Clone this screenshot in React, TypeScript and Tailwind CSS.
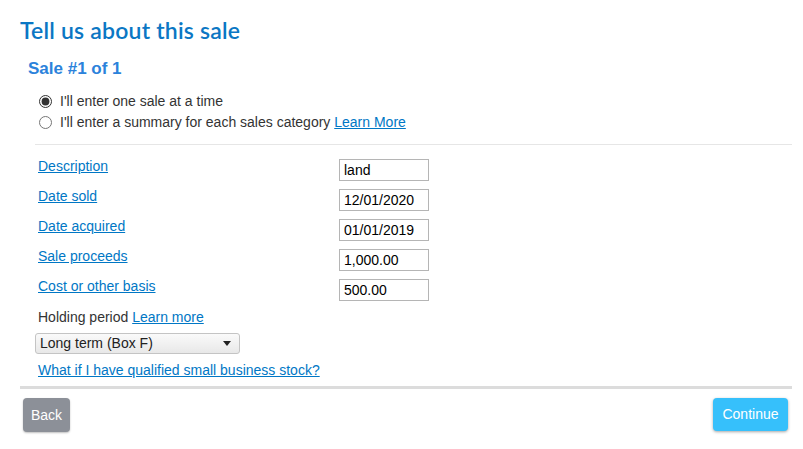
import React from 'react';

const link = 'text-[#0077c5] underline';

const fields = [
  { label: 'Description', value: 'land' },
  { label: 'Date sold', value: '12/01/2020' },
  { label: 'Date acquired', value: '01/01/2019' },
  { label: 'Sale proceeds', value: '1,000.00' },
  { label: 'Cost or other basis', value: '500.00' },
];

export default function App() {
  return (
    <div className="w-[803px] h-[449px] bg-white text-[14px] text-[#333] font-['Liberation_Sans',Arial,sans-serif] overflow-hidden">
      {/* Page heading */}
      <h1 className="pl-[20px] pt-[15px] text-[23px] leading-[30px] font-semibold text-[#0b77c4] font-['Lato','Open_Sans',sans-serif] tracking-[0.2px]">
        Tell us about this sale
      </h1>

      <div className="pl-[28px] pt-[14px] pr-[11px]">
        <h2 className="text-[17px] leading-[20px] font-bold text-[#2b82db]">Sale #1 of 1</h2>

        {/* Entry mode */}
        <div className="mt-[12px] pl-[11px] flex flex-col">
          <label className="flex items-center h-[21px] gap-[8px]">
            <input type="radio" name="mode" defaultChecked className="w-[13px] h-[13px] m-0 accent-[#333]" />
            <span>I'll enter one sale at a time</span>
          </label>
          <label className="flex items-center h-[21px] gap-[8px]">
            <input type="radio" name="mode" className="w-[13px] h-[13px] m-0" />
            <span>
              I'll enter a summary for each sales category <a href="#" className={link}>Learn More</a>
            </span>
          </label>
        </div>

        <div className="mt-[11px] ml-[7px] border-t border-[#e6e6e6]" />

        {/* Sale fields */}
        <div className="pl-[10px] pt-[14px] flex flex-col gap-[8px]">
          {fields.map((f) => (
            <div key={f.label} className="flex items-start h-[22px]">
              <a href="#" className={`${link} w-[301px] leading-[16px] -mt-[1px]`}>{f.label}</a>
              <input
                readOnly
                value={f.value}
                className="w-[90px] h-[22px] border border-[#b5b5b5] px-[4px] text-[14px] text-black outline-none"
              />
            </div>
          ))}
        </div>

        <div className="pl-[10px] mt-[8px] leading-[16px]">
          Holding period <a href="#" className={link}>Learn more</a>
        </div>

        <div className="pl-[7px] mt-[8px]">
          <div className="w-[205px] h-[21px] border border-[#c4c4c4] rounded-[3px] bg-gradient-to-b from-[#fafafa] to-[#e8e8e8] flex items-center justify-between pl-[4px] pr-[8px] text-[#222]">
            <span>Long term (Box F)</span>
            <svg width="8" height="5" viewBox="0 0 8 5"><path d="M0 0h8L4 5z" fill="#222" /></svg>
          </div>
        </div>

        <div className="pl-[10px] mt-[8px] leading-[16px]">
          <a href="#" className={link}>What if I have qualified small business stock?</a>
        </div>
      </div>

      {/* Footer */}
      <div className="mx-[20px] w-[772px] mt-[8px] h-[3px] bg-[#dcdcdc]" />
      <div className="flex justify-between pl-[23px] pr-[15px] pt-[9px]">
        <button className="w-[47px] h-[34px] rounded-[4px] bg-[#8c9098] text-white text-[14px] shadow-[0_1px_2px_rgba(0,0,0,0.25)]">
          Back
        </button>
        <button className="w-[75px] h-[33px] rounded-[4px] bg-[#36c0fb] text-white text-[14px] shadow-[0_1px_3px_rgba(0,0,0,0.35)]">
          Continue
        </button>
      </div>
    </div>
  );
}
